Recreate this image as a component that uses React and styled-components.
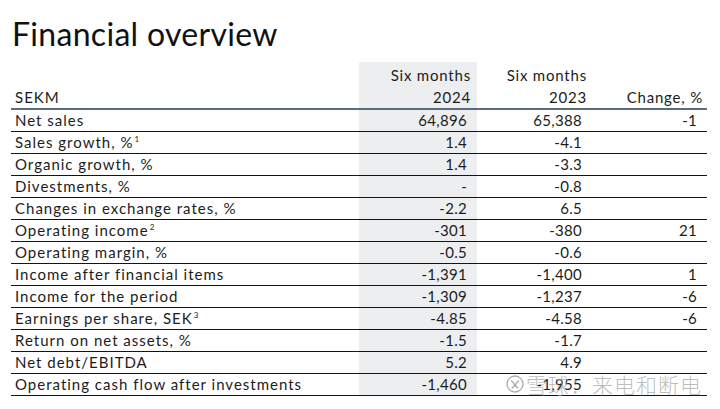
import React from "react";
import styled, { createGlobalStyle } from "styled-components";

const Global = createGlobalStyle`
  html, body { margin: 0; padding: 0; background: #ffffff; }
  body { font-family: Lato, "Noto Sans", sans-serif; color: #1c1c1c; }
`;

const Page = styled.div`
  position: relative;
  width: 720px;
  height: 409px;
  overflow: hidden;
  padding: 14px 13px 0 11px;
  box-sizing: border-box;
`;

const Title = styled.h1`
  margin: 0 0 8px 1px;
  font-family: Lato, "Noto Sans", sans-serif;
  font-weight: 400;
  font-size: 32px;
  line-height: 40px;
  letter-spacing: 0.3px;
  color: #111111;
`;

const Table = styled.table`
  width: 696px;
  border-collapse: collapse;
  table-layout: fixed;
  font-size: 15px;
`;

const HeadCell = styled.th`
  font-weight: 400;
  text-align: ${(p) => (p.$left ? "left" : "right")};
  vertical-align: bottom;
  line-height: 22px;
  letter-spacing: ${(p) => (p.$left ? 1 : 0.8)}px;
  padding: 2px ${(p) => p.$pr || 5}px 0 ${(p) => (p.$left ? 4 : 0)}px;
  background: ${(p) => (p.$shade ? "#eceef0" : "transparent")};
  border-bottom: 2px solid #5b6b82;
  white-space: nowrap;
`;

const Row = styled.tr`
  border-bottom: 1px solid #141414;
`;

const Cell = styled.td`
  height: 21px;
  padding: 0 ${(p) => (p.$left ? 0 : 10)}px 0 ${(p) => (p.$left ? 4 : 0)}px;
  text-align: ${(p) => (p.$left ? "left" : "right")};
  vertical-align: top;
  line-height: 20px;
  letter-spacing: ${(p) => (p.$left ? 1 : 0.3)}px;
  background: ${(p) => (p.$shade ? "#eceef0" : "transparent")};
  white-space: nowrap;
`;

const Sup = styled.sup`
  font-size: 8px;
  line-height: 0;
  vertical-align: 6px;
  margin-left: 1px;
`;

const Watermark = styled.div`
  position: absolute;
  left: 506px;
  top: 371px;
  width: max-content;
  display: flex;
  align-items: center;
  gap: 2px;
  color: rgba(160, 160, 160, 0.7);
  font-family: "Noto Sans CJK SC", sans-serif;
  font-weight: 300;
  font-size: 21px;
  line-height: 26px;
  letter-spacing: 1px;
  white-space: nowrap;
  pointer-events: none;
`;

const LogoSvg = styled.svg`
  flex-shrink: 0;
  width: 18px;
  height: 18px;
`;

const rows = [
  ["Net sales", null, "64,896", "65,388", "-1"],
  ["Sales growth, %", "1", "1.4", "-4.1", ""],
  ["Organic growth, %", null, "1.4", "-3.3", ""],
  ["Divestments, %", null, "-", "-0.8", ""],
  ["Changes in exchange rates, %", null, "-2.2", "6.5", ""],
  ["Operating income", "2", "-301", "-380", "21"],
  ["Operating margin, %", null, "-0.5", "-0.6", ""],
  ["Income after financial items", null, "-1,391", "-1,400", "1"],
  ["Income for the period", null, "-1,309", "-1,237", "-6"],
  ["Earnings per share, SEK", "3", "-4.85", "-4.58", "-6"],
  ["Return on net assets, %", null, "-1.5", "-1.7", ""],
  ["Net debt/EBITDA", null, "5.2", "4.9", ""],
  ["Operating cash flow after investments", null, "-1,460", "-1,955", ""],
];

function Logo() {
  return (
    <LogoSvg viewBox="0 0 18 18" fill="none" stroke="rgba(150,150,150,0.8)" strokeWidth="1.3">
      <circle cx="9" cy="9" r="8" />
      <path d="M5 5.5 C7 7 8.5 8.5 8.5 10 C8.5 11.5 7 12.5 5.5 13" />
      <path d="M13 5.5 C11 7 9.5 8.5 9.5 10 C9.5 11.5 11 12.5 12.5 13" />
    </LogoSvg>
  );
}

export default function App() {
  return (
    <>
      <Global />
      <Page>
        <Title>Financial overview</Title>
        <Table>
          <colgroup>
            <col style={{ width: 348 }} />
            <col style={{ width: 118 }} />
            <col style={{ width: 115 }} />
            <col style={{ width: 115 }} />
          </colgroup>
          <thead>
            <tr>
              <HeadCell $left>SEKM</HeadCell>
              <HeadCell $shade $pr={6}>
                Six months
                <br />
                2024
              </HeadCell>
              <HeadCell $pr={5}>
                Six months
                <br />
                2023
              </HeadCell>
              <HeadCell $pr={4}>Change, %</HeadCell>
            </tr>
          </thead>
          <tbody>
            {rows.map(([label, sup, a, b, c]) => (
              <Row key={label}>
                <Cell $left>
                  {label}
                  {sup && <Sup>{sup}</Sup>}
                </Cell>
                <Cell $shade>{a}</Cell>
                <Cell>{b}</Cell>
                <Cell>{c}</Cell>
              </Row>
            ))}
          </tbody>
        </Table>
        <Watermark>
          <Logo />
          <span>雪球：来电和断电</span>
        </Watermark>
      </Page>
    </>
  );
}
